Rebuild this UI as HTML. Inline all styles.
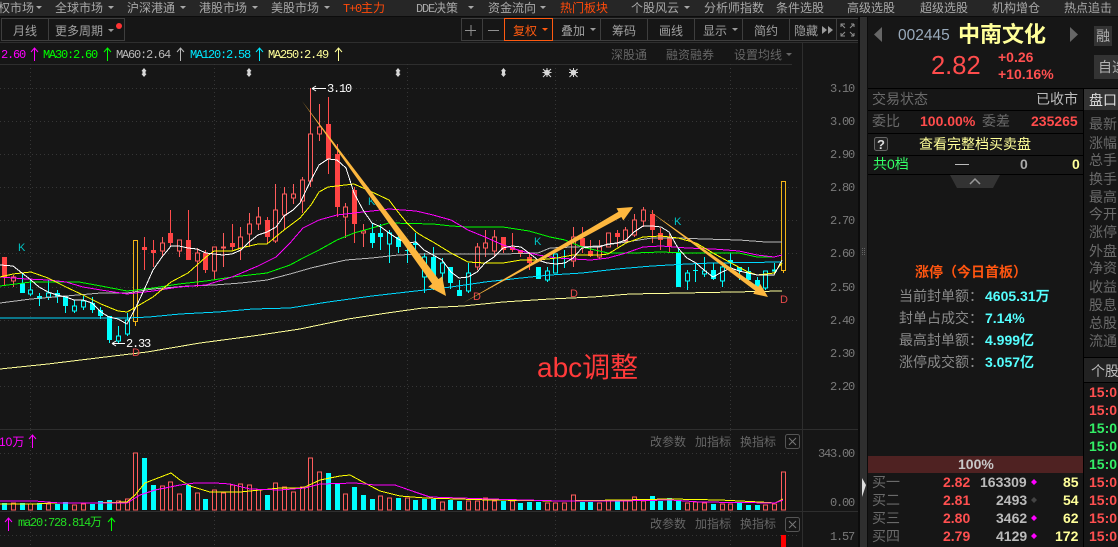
<!DOCTYPE html>
<html lang="zh"><head><meta charset="utf-8"><title>K</title>
<style>
html,body{margin:0;padding:0;background:#161616;width:1118px;height:547px;overflow:hidden}
svg{display:block}
text{font-family:"Liberation Sans","WenQuanYi Zen Hei","Noto Sans CJK SC",sans-serif;font-size:14px}
.m text{font-size:12px;fill:#a8a8a8}
.mono{font-family:"Liberation Mono","WenQuanYi Zen Hei",monospace;font-size:12px;letter-spacing:-1.2px}
.ax text{font-family:"Liberation Mono",monospace;font-size:12px;letter-spacing:-1.2px;fill:#7a7a7a}
.g{fill:#6a6a6a}
.tb text{fill:#a0a0a0;font-size:12px}
.q text,text.q{fill:#666;font-size:12px}
.b{font-weight:bold}
.s13{font-size:13px}
</style></head><body>
<svg xmlns="http://www.w3.org/2000/svg" width="1118" height="547" viewBox="0 0 1118 547">
<rect width="1118" height="547" fill="#161616"/>
<!-- menu -->
<rect width="1118" height="16" fill="#262626"/>
<rect y="16" width="1118" height="1" fill="#0c0c0c"/>
<g class="m">
<text x="-2" y="12">权市场</text><text x="55" y="12">全球市场</text><text x="127" y="12">沪深港通</text><text x="199" y="12">港股市场</text><text x="271" y="12">美股市场</text>
<text x="343" y="12" style="fill:#ff4a0a"><tspan class="mono" style="fill:#ff4a0a">T+0</tspan>主力</text><text x="416" y="12"><tspan class="mono">DDE</tspan>决策</text><text x="488" y="12">资金流向</text>
<text x="560" y="12" style="fill:#ff4a0a">热门板块</text><text x="631" y="12">个股风云</text><text x="704" y="12">分析师指数</text><text x="776" y="12">条件选股</text><text x="847" y="12">高级选股</text><text x="920" y="12">超级选股</text><text x="992" y="12">机构增仓</text><text x="1064" y="12">热点追击</text>
</g>
<path fill="#a8a8a8" d="M36 6h6l-3 3zM108 6h6l-3 3zM180 6h6l-3 3zM252 6h6l-3 3zM324 6h6l-3 3zM468 6h6l-3 3zM540 6h6l-3 3zM684 6h6l-3 3z"/>
<!-- toolbar -->
<g fill="none" stroke="#3e3e3e"><path d="M1.5 18.5H124.5V40.5H1.5zM48.5 18.5V40.5"/>
<path d="M461.5 18.5H858.5V40.5H461.5zM482.5 18.5V40.5M600.5 18.5V40.5M647.5 18.5V40.5M694.5 18.5V40.5M742.5 18.5V40.5M789.5 18.5V40.5M836.5 18.5V40.5"/></g>
<rect x="504.500" y="18.500" width="48" height="22" fill="#161616" stroke="#ff5a10"/>
<circle cx="119" cy="26" r="3" fill="#ff3333"/>
<g class="tb">
<text x="13" y="35">月线</text><text x="55" y="35">更多周期</text>
<text x="513" y="35" style="fill:#ff5a10">复权</text><text x="561" y="35">叠加</text><text x="612" y="35">筹码</text><text x="659" y="35">画线</text><text x="703" y="35">显示</text><text x="754" y="35">简约</text><text x="794" y="35">隐藏</text>
</g>
<path fill="#9a9a9a" d="M108 29h6l-3 3zM590 28h6l-3 3zM732 28h6l-3 3zM822 26l5 4-5 4zM828 26l5 4-5 4z"/>
<path fill="#ff5a10" d="M542 28h6l-3 3z"/>
<path stroke="#909090" fill="none" d="M465 30.500h11M471 25v11M488 30.500h11M841 27v-3h4M854 24h-3M854 24v3M841 33v3h4M854 36h-3M854 36v-3M841 24l4 4M854 24l-4 4M841 36l4-4M854 36l-4-4" stroke-width="1"/>
<!-- lines -->
<path stroke="#2e2e2e" fill="none" d="M0 42.500H860M0 64.500H792M802.500 42V547M0 429.500H860M0 511.500H860"/>
<!-- legend -->
<text class="mono" x="1" y="58" fill="#ff00ff">2.60</text>
<text class="mono" x="43" y="58" fill="#00ff00">MA30:2.60</text>
<text class="mono" x="116" y="58" fill="#b8b8b8">MA60:2.64</text>
<text class="mono" x="190" y="58" fill="#00e8ff">MA120:2.58</text>
<text class="mono" x="268" y="58" fill="#ffff99">MA250:2.49</text>
<g fill="none"><path stroke="#ff00ff" d="M34.500 61V48M31 52l3.500-4 3.500 4"/><path stroke="#00ff00" d="M107.500 61V48M104 52l3.500-4 3.500 4"/><path stroke="#b8b8b8" d="M180.500 61V48M177 52l3.500-4 3.500 4"/><path stroke="#00e8ff" d="M259.500 61V48M256 52l3.500-4 3.500 4"/><path stroke="#ffff99" d="M338.500 61V48M335 52l3.500-4 3.500 4"/></g>
<g class="q"><text x="611" y="59">深股通</text><text x="666" y="59">融资融券</text><text x="734" y="59">设置均线</text></g>
<path fill="#666" d="M786 53h6l-3 3z"/>
<!-- grid -->
<g stroke="#363636" stroke-dasharray="1 3" fill="none"><path d="M0 88.500H800M0 121.500H800M0 154.500H800M0 187.500H800M0 220.500H800M0 253.500H800M0 287.500H800M0 320.500H800M0 353.500H800M0 386.500H800M0 453.500H800M0 535.500H800"/>
<path d="M30.500 64V429M214.500 64V429M407.500 64V429M555.500 64V429M730.500 64V429M30.500 430V511M214.500 430V511M407.500 430V511M555.500 430V511M730.500 430V511M30.500 512V547M214.500 512V547M555.500 512V547M730.500 512V547"/></g>
<g class="ax"><text x="830" y="92">3.10</text><text x="830" y="125">3.00</text><text x="830" y="158">2.90</text><text x="830" y="191">2.80</text><text x="830" y="224">2.70</text><text x="830" y="257">2.60</text><text x="830" y="291">2.50</text><text x="830" y="324">2.40</text><text x="830" y="357">2.30</text><text x="830" y="390">2.20</text><text x="818" y="457">343.00</text><text x="830" y="506">0.00</text><text x="830" y="540">1.57</text></g>
<!-- markers -->
<g fill="#d8d8d8"><path d="M144 68l2.500 3-1 .5v2l1 .5-2.500 3-2.500-3 1-.5v-2l-1-.5zM249 68l2.500 3-1 .5v2l1 .5-2.500 3-2.500-3 1-.5v-2l-1-.5zM398 68l2.500 3-1 .5v2l1 .5-2.500 3-2.500-3 1-.5v-2l-1-.5zM503.500 68l2.500 3-1 .5v2l1 .5-2.500 3-2.500-3 1-.5v-2l-1-.5z"/>
<circle cx="547" cy="72.500" r="2.800"/><circle cx="573.500" cy="72.500" r="2.800"/></g>
<path stroke="#d8d8d8" d="M543 69l8 8M551 69l-8 8M542.500 72.500h9M547 68v9M569.500 69l8 8M577.500 69l-8 8M569 72.500h9M573.500 68v9" fill="none"/>
<!-- candles wicks -->
<g shape-rendering="crispEdges">
<path fill="none" stroke="#ff5c5c" d="M13.500 275V287M162.500 237V257M179.500 240V257M197.500 248V287M214.500 247V280M223.500 233V267M240.500 227V260M249.500 213V247M258.500 207V230M275.500 184V243M284.500 187V230M293.500 184V204M302.500 177V213M310.500 88V187M319.500 104V141M345.500 203V238M363.500 224V247M477.500 243V270M485.500 230V257M494.500 230V257M573.500 227V267M599.500 240V259M608.500 233V247M625.500 227V243M634.500 214V237M643.500 207V227"/>
<path fill="none" stroke="#ff4c4c" d="M4.500 257V286M144.500 237V270M153.500 240V267M170.500 210V247M188.500 210V260M205.500 250V273M232.500 224V250M267.500 217V243M328.500 97V174M337.500 144V217M354.500 187V243M503.500 237V253M512.500 233V252M520.500 250V257M529.500 252V270M582.500 227V253M590.500 240V257M617.500 230V247M652.500 210V243M660.500 228V250M669.500 234V253"/>
<path fill="none" stroke="#00ffff" d="M22.500 273V293M30.500 280V296M39.500 293V306M48.500 280V300M57.500 290V303M65.500 296V313M74.500 300V313M83.500 296V310M92.500 297V313M100.500 307V319M109.500 316V343M118.500 326V343M127.500 313V336M372.500 223V248M380.500 224V250M389.500 230V263M398.500 233V253M407.500 243V263M415.500 233V257M424.500 253V293M433.500 247V290M442.500 258V288M450.500 267V289M459.500 280V296M468.500 263V293M538.500 267V279M547.500 267V282M555.500 254V273M564.500 250V268M678.500 247V287M687.500 270V290M695.500 263V282M704.500 257V277M713.500 263V280M722.500 263V287M730.500 253V272M739.500 267V280M748.500 267V281M757.500 277V293M765.500 271V290M774.500 263V273"/>
<!-- hollow red -->
<path fill="#161616" stroke="#ff5c5c" d="M11.500 277h4V281h-4zM160.500 243h4V251h-4zM177.500 240h4V251h-4zM195.500 253h4V261h-4zM212.500 247h4V271h-4zM221.500 247h4V248h-4zM238.500 237h4V248h-4zM247.500 224h4V234h-4zM256.500 217h4V224h-4zM273.500 210h4V241h-4zM282.500 194h4V215h-4zM291.500 194h4V198h-4zM300.500 180h4V201h-4zM308.500 134h4V181h-4zM317.500 127h4V134h-4zM343.500 207h4V217h-4zM361.500 231h4V233h-4zM475.500 247h4V267h-4zM483.500 243h4V248h-4zM492.500 237h4V251h-4zM571.500 237h4V261h-4zM597.500 247h4V257h-4zM606.500 233h4V247h-4zM623.500 230h4V241h-4zM632.500 220h4V235h-4zM641.500 210h4V221h-4z"/>
<!-- filled red -->
<path fill="#ff4444" d="M2 257h5V277h-5zM142 247h5V250h-5zM151 250h5V253h-5zM168 233h5V243h-5zM186 240h5V260h-5zM203 253h5V270h-5zM230 243h5V247h-5zM265 220h5V237h-5zM326 124h5V159h-5zM335 154h5V207h-5zM352 190h5V224h-5zM501 237h5V250h-5zM510 247h5V250h-5zM518 250h5V253h-5zM527 257h5V263h-5zM580 238h5V247h-5zM588 251h5V256h-5zM615 233h5V237h-5zM650 214h5V230h-5zM658 233h5V240h-5zM667 237h5V247h-5z"/>
<!-- filled cyan -->
<path fill="#00ffff" d="M20 283h5V293h-5zM37 296h5V299h-5zM55 293h5V297h-5zM63 296h5V306h-5zM90 303h5V310h-5zM98 310h5V316h-5zM107 316h5V340h-5zM370 233h5V243h-5zM378 233h5V237h-5zM396 237h5V247h-5zM405 250h5V251h-5zM413 243h5V245h-5zM431 257h5V280h-5zM448 267h5V283h-5zM457 290h5V296h-5zM536 267h5V279h-5zM562 258h5V259h-5zM676 253h5V287h-5zM693 270h5V271h-5zM711 270h5V279h-5zM728 260h5V262h-5zM737 267h5V271h-5zM746 271h5V280h-5zM755 280h5V288h-5z"/>
<!-- hollow cyan -->
<path fill="#161616" stroke="#00ffff" d="M28.500 290h4V294h-4zM46.500 293h4V297h-4zM72.500 306h4V311h-4zM81.500 301h4V307h-4zM116.500 336h4V341h-4zM125.500 320h4V334h-4zM387.500 233h4V244h-4zM422.500 257h4V277h-4zM440.500 263h4V273h-4zM466.500 273h4V291h-4zM545.500 271h4V280h-4zM553.500 254h4V273h-4zM685.500 273h4V281h-4zM702.500 271h4V274h-4zM720.500 267h4V281h-4zM763.500 271h4V288h-4zM772.500 270h4V271h-4z"/>
<!-- orange -->
<path fill="#161616" stroke="#f2b418" d="M133.500 240.500h4V321.500h-4zM135.500 321V326M781.500 181.500h4V270.500h-4zM783.500 270V273"/>
</g>
<!-- MAs -->
<g fill="none" stroke-width="1" shape-rendering="crispEdges">
<polyline stroke="#ffff99" points="0,369 48,364 97,358 147,352 200,343 253,336 300,329 348,319 387,313 423,308 463,306 503,302 550,299 593,297 630,294 683,293 733,292 782,291"/>
<polyline stroke="#00d8ff" points="0,318 127,318 149,317 180,314 218,312 253,309 290,308 328,302 372,296 407,292 451,287 485,282 521,278 550,275 582,273 617,269 652,266 687,264 713,263 782,262"/>
<polyline stroke="#b8b8b8" points="0,303 31,299 66,296 101,293 127,293 153,289 188,286 214,285 241,283 267,280 290,274 311,268 328,264 346,260 372,258 398,255 424,254 468,254 503,254 538,253 550,248 573,247 599,246 626,242 652,238 678,238 704,239 739,240 766,242 782,242"/>
<polyline stroke="#00ff00" points="0,286 31,282 48,282 79,282 101,286 127,291 153,288 179,284 206,281 232,277 267,273 290,265 303,258 319,250 337,240 354,233 372,228 389,223 433,224 451,226 468,227 503,227 529,231 550,237 565,240 582,247 608,253 634,253 661,252 687,253 713,253 739,253 757,257 774,257 782,255"/>
<polyline stroke="#ff00ff" points="0,277 27,279 48,280 66,282 83,287 101,290 127,294 153,291 179,287 206,285 232,277 258,266 276,257 290,243 303,228 319,220 337,215 354,213 372,211 389,209 416,211 433,215 451,220 468,230 485,237 503,245 521,251 538,255 557,258 573,259 591,260 608,258 626,253 643,247 661,246 687,248 713,249 739,251 757,255 774,257 782,255"/>
<polyline stroke="#ffff00" points="0,277 13,274 31,272 48,278 66,287 83,295 101,304 118,311 127,312 136,307 153,297 171,282 188,273 206,257 214,251 232,251 241,248 258,244 267,244 284,230 300,218 311,205 319,192 328,187 354,184 372,192 389,200 398,212 407,223 416,232 424,237 433,242 451,253 468,262 485,263 503,263 521,260 538,260 557,258 573,255 599,255 608,254 626,243 643,237 661,236 678,238 696,243 713,253 731,263 748,272 757,275 774,273 782,263"/>
<polyline stroke="#ffffff" points="0,265 13,266 22,273 31,280 39,287 48,292 57,295 66,297 74,300 83,300 92,303 101,312 109,317 118,319 127,324 136,307 144,290 153,270 162,257 171,246 179,246 188,248 197,249 206,253 214,254 223,255 232,254 241,250 249,242 258,235 267,232 276,227 284,216 293,210 300,203 311,180 319,165 328,159 337,160 346,168 354,193 363,210 372,223 381,227 389,233 398,239 407,243 416,242 424,250 433,255 442,260 451,272 459,278 468,277 477,272 485,263 494,257 503,248 512,246 521,247 529,253 538,260 547,263 556,264 565,263 573,258 582,248 591,247 599,247 608,244 617,243 626,240 634,232 643,226 652,226 661,227 669,232 678,248 687,258 696,263 704,270 713,277 722,272 731,268 739,271 748,273 757,275 766,275 774,275 782,260"/>
</g>
<!-- labels on chart -->
<path stroke="#fff" fill="none" d="M312 88.500H326M312 88.500l4-2.500M312 88.500l4 2.500M112 343.500H125M112 343.500l4-2.500M112 343.500l4 2.500"/>
<text class="mono" x="327" y="92" fill="#fff">3.10</text>
<text class="mono" x="126" y="347" fill="#fff">2.33</text>
<g fill="#00c4c4"><text x="18" y="251" style="font-size:11px">K</text><text x="368" y="205" style="font-size:11px">K</text><text x="534" y="245" style="font-size:11px">K</text><text x="674" y="225" style="font-size:11px">K</text></g>
<g fill="#e64a4a"><text x="132" y="356" style="font-size:11px">D</text><text x="473" y="300" style="font-size:11px">D</text><text x="570" y="297" style="font-size:11px">D</text><text x="780" y="303" style="font-size:11px">D</text></g>
<!-- arrows -->
<g fill="#fdb73e"><polygon points="302,101 438.500,279.100 442.200,276.400 446,296 428.400,286.600 432.100,283.900"/><polygon points="463,303 618.400,211.800 616.500,208.300 633,207 623.300,220.500 621.400,217"/><polygon points="648,210 758.200,286.800 760.200,283.900 768,297 753.200,293.700 755.200,290.800"/></g>
<text x="537" y="377" fill="#ff3a3a" style="font-size:28px">abc调整</text>
<!-- volume -->
<text x="-1" y="446" fill="#ff00ff" style="font-size:12px">10万</text>
<path stroke="#ff00ff" fill="none" d="M32.500 448V435M29 439l3.500-4 3.500 4"/>
<g class="q"><text x="650" y="446">改参数</text><text x="695" y="446">加指标</text><text x="740" y="446">换指标</text></g>
<rect x="785.500" y="434.500" width="14" height="14" rx="2" fill="none" stroke="#555"/><path stroke="#777" d="M789 438l7 7M796 438l-7 7"/>
<g shape-rendering="crispEdges">
<path fill="#161616" stroke="#ff5c5c" d="M11.500 503h4V510h-4zM28.500 504h4V510h-4zM46.500 504h4V510h-4zM72.500 505h4V510h-4zM81.500 504h4V510h-4zM116.500 501h4V510h-4zM125.500 499h4V510h-4zM133.500 453h4V510h-4zM160.500 486h4V510h-4zM168.500 482h4V510h-4zM177.500 494h4V510h-4zM195.500 493h4V510h-4zM212.500 490h4V510h-4zM221.500 493h4V510h-4zM230.500 485h4V510h-4zM238.500 484h4V510h-4zM247.500 485h4V510h-4zM256.500 490h4V510h-4zM273.500 483h4V510h-4zM282.500 487h4V510h-4zM291.500 492h4V510h-4zM300.500 487h4V510h-4zM308.500 458h4V510h-4zM317.500 472h4V510h-4zM343.500 494h4V510h-4zM378.500 496h4V510h-4zM387.500 498h4V510h-4zM405.500 498h4V510h-4zM440.500 502h4V510h-4zM466.500 501h4V510h-4zM475.500 501h4V510h-4zM483.500 498h4V510h-4zM492.500 501h4V510h-4zM510.500 501h4V510h-4zM545.500 503h4V510h-4zM553.500 503h4V510h-4zM562.500 503h4V510h-4zM571.500 495h4V510h-4zM597.500 503h4V510h-4zM606.500 500h4V510h-4zM623.500 500h4V510h-4zM632.500 497h4V510h-4zM641.500 501h4V510h-4zM685.500 503h4V510h-4zM693.500 502h4V510h-4zM702.500 503h4V510h-4zM720.500 504h4V510h-4zM728.500 504h4V510h-4zM763.500 505h4V510h-4zM772.500 504h4V510h-4zM781.500 472h4V510h-4z"/>
<path fill="#00ffff" d="M2 503h5V510h-5zM20 503h5V510h-5zM37 503h5V510h-5zM55 504h5V510h-5zM63 502h5V510h-5zM90 504h5V510h-5zM98 501h5V510h-5zM107 500h5V510h-5zM142 458h5V510h-5zM151 485h5V510h-5zM186 485h5V510h-5zM203 499h5V510h-5zM265 495h5V510h-5zM326 473h5V510h-5zM335 483h5V510h-5zM352 487h5V510h-5zM361 495h5V510h-5zM370 499h5V510h-5zM396 498h5V510h-5zM413 500h5V510h-5zM422 499h5V510h-5zM431 499h5V510h-5zM448 500h5V510h-5zM457 501h5V510h-5zM501 501h5V510h-5zM518 503h5V510h-5zM527 502h5V510h-5zM536 502h5V510h-5zM580 502h5V510h-5zM588 502h5V510h-5zM615 500h5V510h-5zM650 496h5V510h-5zM658 501h5V510h-5zM667 498h5V510h-5zM676 500h5V510h-5zM711 504h5V510h-5zM737 503h5V510h-5zM746 505h5V510h-5zM755 505h5V510h-5z"/>
</g>
<g fill="none" stroke-width="1" shape-rendering="crispEdges">
<polyline stroke="#ffff00" points="0,504 35,504 52,503 95,503 127,502 135,495 145,483 171,473 180,480 190,486 210,492 240,492 280,488 300,488 305,487 320,480 340,476 350,475 363,482 380,491 400,496 425,498 490,500 560,501 620,500 670,499 720,500 760,502 775,503 783,499"/>
<polyline stroke="#ff00ff" points="0,501 35,501 60,503 127,503 140,495 155,490 180,485 195,483 215,483 230,484 250,489 280,490 305,488 320,484 355,483 375,485 395,485 415,492 430,497 490,499 560,501 620,501 670,500 700,502 775,503 783,500"/>
</g>
<!-- sub-indicator -->
<path stroke="#ff00ff" fill="none" d="M8.500 531V518M5 522l3.500-4 3.500 4"/>
<text class="mono" x="18" y="526" fill="#22dd22">ma20:728.814万</text>
<path stroke="#00ff00" fill="none" d="M111.500 531V518M108 522l3.500-4 3.500 4"/>
<g class="q"><text x="650" y="528">改参数</text><text x="695" y="528">加指标</text><text x="740" y="528">换指标</text></g>
<rect x="785.500" y="517.500" width="14" height="14" rx="2" fill="none" stroke="#555"/><path stroke="#777" d="M789 521l7 7M796 521l-7 7"/>
<rect x="781" y="535" width="5" height="12" fill="#ff0000"/>
<!-- splitter -->
<rect x="858" y="17" width="10" height="530" fill="#0c0c0c"/>
<rect x="860" y="17" width="7" height="530" fill="#2f2f2f"/>
<path fill="#dcdcdc" d="M862 478l4 7-4 12z"/>
<path stroke="#666" stroke-dasharray="1 1" d="M862.500 248v8M864.500 248v8" fill="none"/>
<!-- right header -->
<path fill="#666" d="M882 27v15l-8-7.500zM1070 27v15l8-7.500z"/>
<text x="898" y="40" fill="#9ab" style="font-size:15.500px">002445</text>
<text x="958" y="42" fill="#ffff99" class="b" style="font-size:22px">中南文化</text>
<rect x="1094" y="26" width="18" height="20" fill="#333"/><text x="1096" y="41" fill="#b0b0b0">融</text>
<rect x="1094" y="55" width="24" height="24" fill="#333"/><text x="1098" y="72" fill="#b0b0b0">自选</text>
<text x="931" y="74" fill="#ff4c4c" style="font-size:25.500px">2.82</text>
<text x="998" y="62" fill="#ff5050" class="b">+0.26</text>
<text x="998" y="79" fill="#ff5050" class="b">+10.16%</text>
<path stroke="#000" fill="none" d="M868 88.500H1118M868 110.500H1083M868 133.500H1083M868 155.500H1083M868 174.500H1083M1083.500 88V547M1084 357.500H1118M1084 382.500H1118"/>
<text x="872" y="104" class="g">交易状态</text><text x="1036" y="104" fill="#bcbcbc">已收市</text>
<text x="872" y="126" class="g">委比</text><text x="920" y="126" fill="#ff4c4c" class="b">100.00%</text><text x="982" y="126" class="g">委差</text><text x="1031" y="126" fill="#ff4c4c" class="b">235265</text>
<rect x="874.500" y="137.500" width="13" height="13" rx="2" fill="#222" stroke="#666"/><text x="877" y="149" fill="#ddd" class="b s13">?</text>
<text x="919" y="149" fill="#ffff99">查看完整档买卖盘</text>
<text x="873" y="169" fill="#33ff66">共0档</text>
<path stroke="#bbb" d="M955 164.500h14"/>
<text x="1020" y="169" fill="#aaa" class="b">0</text><text x="1072" y="169" fill="#ffff99" class="b">0</text>
<path fill="#333" d="M950 175h50l-7 13h-36z"/><path stroke="#999" stroke-width="1.500" fill="none" d="M970 184l5-5 5 5"/>
<rect x="1084" y="89" width="34" height="21" fill="#333"/><text x="1089" y="105" fill="#ddd">盘口</text>
<g class="g"><text x="1089" y="129">最新</text><text x="1089" y="148">涨幅</text><text x="1089" y="165">总手</text><text x="1089" y="184">换手</text><text x="1089" y="202">最高</text><text x="1089" y="219">今开</text><text x="1089" y="237">涨停</text><text x="1089" y="256">外盘</text><text x="1089" y="273">净资</text><text x="1089" y="292">收益</text><text x="1089" y="310">股息</text><text x="1089" y="328">总股</text><text x="1089" y="346">流通</text></g>
<rect x="1084" y="358" width="34" height="24" fill="#222"/><text x="1091" y="376" fill="#bbb">个股</text>
<g class="b"><text x="1089" y="397" fill="#ff5050">15:0</text><text x="1089" y="415" fill="#ff5050">15:0</text><text x="1089" y="433" fill="#33ee66">15:0</text><text x="1089" y="451" fill="#33ee66">15:0</text><text x="1089" y="469" fill="#33ee66">15:0</text><text x="1089" y="487" fill="#ff5050">15:0</text><text x="1089" y="505" fill="#ff5050">15:0</text><text x="1089" y="523" fill="#ff5050">15:0</text><text x="1089" y="541" fill="#ff5050">15:0</text></g>
<!-- limit up -->
<text x="915" y="277" fill="#ff5510" class="b">涨停（今日首板）</text>
<g fill="#8a8a8a"><text x="899" y="301">当前封单额：</text><text x="899" y="323">封单占成交：</text><text x="899" y="345">最高封单额：</text><text x="899" y="367">涨停成交额：</text></g>
<g fill="#55ffff" class="b"><text x="985" y="301">4605.31万</text><text x="985" y="323">7.14%</text><text x="985" y="345">4.999亿</text><text x="985" y="367">3.057亿</text></g>
<!-- order book -->
<rect x="868" y="456" width="215" height="17" fill="#4f2222"/>
<text x="958" y="469" fill="#c8c8c8" class="b">100%</text>
<g class="g"><text x="872" y="487">买一</text><text x="872" y="505">买二</text><text x="872" y="523">买三</text><text x="872" y="541">买四</text></g>
<g fill="#ff5050" class="b"><text x="943" y="487">2.82</text><text x="943" y="505">2.81</text><text x="943" y="523">2.80</text><text x="943" y="541">2.79</text></g>
<g fill="#bbb" class="b"><text x="980" y="487">163309</text><text x="996" y="505">2493</text><text x="996" y="523">3462</text><text x="996" y="541">4129</text></g>
<path fill="#ff00ff" d="M1034 479l3 3-3 3-3-3zM1034 515l3 3-3 3-3-3zM1034 533l3 3-3 3-3-3z"/><path fill="#444" d="M1034 497l3 3-3 3-3-3z"/>
<g fill="#ffff99" class="b"><text x="1063" y="487">85</text><text x="1063" y="505">54</text><text x="1063" y="523">62</text><text x="1055" y="541">172</text></g>
</svg>
</body></html>
